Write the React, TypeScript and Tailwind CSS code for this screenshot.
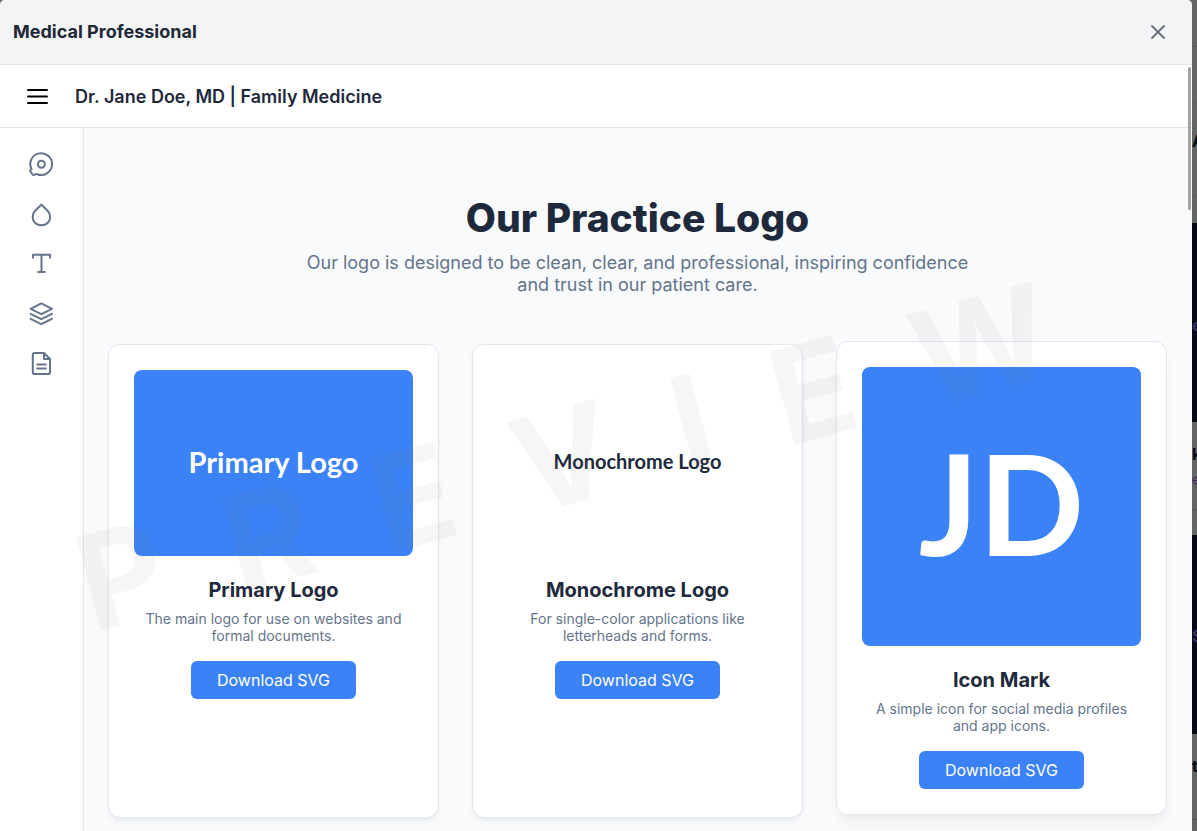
import type { ReactNode } from "react";
import { X } from "lucide-react";

function Icon({ children }: { children: ReactNode }) {
  return (
    <svg
      viewBox="0 0 26 26"
      className="size-[26px]"
      fill="none"
      stroke="currentColor"
      strokeWidth="2"
      strokeLinecap="round"
      strokeLinejoin="round"
    >
      {children}
    </svg>
  );
}

const nav = [
  {
    label: "Logo",
    icon: (
      <Icon>
        <path d="M9.2 23.2A10.9 10.9 0 1 0 3.6 18.2C3.2 18.6 2.2 18.9 2.1 19.9C2 20.9 3.2 21.2 3.5 21.8C3.8 22.6 4.2 24.1 5.6 23.9C6.8 23.7 7.6 22.7 9.2 23.2" />
        <circle cx="13.4" cy="13.3" r="3.5" />
      </Icon>
    ),
  },
  {
    label: "Colors",
    icon: (
      <Icon>
        <path d="M13.4 3.6L19.6 9.8C23 13.2 23 18.8 19.6 22C16.2 25.1 10.6 25.1 7.2 22C3.8 18.8 3.8 13.2 7.2 9.8Z" />
      </Icon>
    ),
  },
  {
    label: "Typography",
    icon: (
      <Icon>
        <path d="M5 6.8V3.8H22V6.8M13.5 3.8V21M10.2 21H16.8" />
      </Icon>
    ),
  },
  {
    label: "Layers",
    icon: (
      <Icon>
        <path d="M13.3 2.4L24 7.8L13.3 13.2L2.6 7.8ZM2.6 12.8L13.3 18.2L24 12.8M2.6 17.8L13.3 23.2L24 17.8" />
      </Icon>
    ),
  },
  {
    label: "Guidelines",
    icon: (
      <Icon>
        <path d="M16 2H6.6C5.6 2 4.8 2.8 4.8 3.8V21.2C4.8 22.2 5.6 23 6.6 23H20.2C21.2 23 22 22.2 22 21.2V8ZM16 2V8H22M9.2 13.6H17.8M9.2 17.6H17.8" />
      </Icon>
    ),
  },
];

type Logo = { title: string; text: string; art: "primary" | "mono" | "mark"; raised?: boolean };

const logos: Logo[] = [
  { title: "Primary Logo", text: "The main logo for use on websites and formal documents.", art: "primary" },
  { title: "Monochrome Logo", text: "For single-color applications like letterheads and forms.", art: "mono" },
  { title: "Icon Mark", text: "A simple icon for social media profiles and app icons.", art: "mark", raised: true },
];

const artStyles = {
  primary: "aspect-[3/2] bg-[#3b82f6] pb-1 text-white text-[29px]",
  mono: "aspect-[3/2] bg-white pb-1 text-[#1e293b] text-[20px]",
  mark: "aspect-square bg-[#3b82f6] pb-2 text-white text-[139px]",
};
const artText = { primary: "Primary Logo", mono: "Monochrome Logo", mark: "JD" };

function LogoCard({ title, text, art, raised }: Logo) {
  return (
    <article
      className={
        raised
          ? "-translate-y-[3px] rounded-xl border border-[#e2e8f0] bg-white p-[25px] text-center shadow-lg shadow-black/5"
          : "rounded-xl border border-[#e2e8f0] bg-white p-[25px] text-center shadow-md shadow-black/5"
      }
    >
      <div className={`flex items-center justify-center rounded-lg font-['Lato',sans-serif] font-bold leading-none ${artStyles[art]}`}>
        {artText[art]}
      </div>
      <h2 className="mt-[22px] text-xl leading-6 font-bold text-[#1e293b]">{title}</h2>
      <p className="mt-2 px-2 text-sm leading-[17px] text-[#64748b]">{text}</p>
      <button type="button" className="mt-[17px] rounded-md bg-[#3b82f6] px-[26px] py-[9px] text-base leading-5 text-white">
        Download SVG
      </button>
    </article>
  );
}

function PageBehind() {
  return (
    <div aria-hidden="true" className="flex w-[5px] shrink-0 flex-col overflow-hidden bg-[#646665] text-base leading-5 font-bold whitespace-nowrap text-[#050a12]">
      <div className="h-[47px] border-b border-[#565857]" />
      <div className="h-14 border-b border-[#5c5e5d]" />
      <div className="h-[94px] border-b border-[#5c5e5d] pt-7">A</div>
      <div className="h-[26px]" />
      <div className="h-[199px] bg-[#060a14] pt-[92px] text-[#3d3560]">e</div>
      <div className="h-[88px] border-b border-[#565857] pt-[22px]">
        <div>k</div>
        <div className="pt-2 text-xs font-normal text-[#3f2360]">er</div>
      </div>
      <div className="h-[25px]" />
      <div className="h-[199px] bg-[#060a14] pt-[91px] text-[#3d3560]">S</div>
      <div className="h-[86px] border-b border-[#565857] pt-[22px]">t</div>
    </div>
  );
}

export default function App() {
  return (
    <div className="flex h-screen overflow-hidden bg-[#646665] font-['Inter',sans-serif]">
      <div className="relative flex min-w-0 flex-1 flex-col overflow-hidden rounded-t-[5px] bg-[#f8fafc]">
        <header className="flex h-[65px] shrink-0 items-center justify-between border-b border-[#e5e7eb] bg-[#f3f4f6] pr-[22px] pl-[13px]">
          <h2 className="text-lg font-bold text-[#1f2937]">Medical Professional</h2>
          <button type="button" aria-label="Close" className="text-[#6b7280]">
            <X className="size-6" />
          </button>
        </header>
        <div className="relative flex min-h-0 flex-1 flex-col overflow-hidden">
          <div className="flex h-[63px] shrink-0 items-center border-b border-[#e2e8f0] bg-white pl-6">
            <button type="button" aria-label="Menu" className="text-black">
              <svg viewBox="0 0 26 26" className="size-[26px]" fill="none" stroke="currentColor" strokeWidth="2" strokeLinecap="round">
                <path d="M4 7H23M4 13.5H23M4 20H23" />
              </svg>
            </button>
            <p className="ml-[25px] pt-px text-lg font-semibold text-[#1e293b]">Dr. Jane Doe, MD | Family Medicine</p>
          </div>
          <div className="flex min-h-0 flex-1">
            <nav className="flex w-[84px] shrink-0 flex-col items-center gap-6 border-r border-[#e2e8f0] bg-white pt-[23px] pr-px text-[#64748b]">
              {nav.map((item) => (
                <a key={item.label} href="#" aria-label={item.label}>
                  {item.icon}
                </a>
              ))}
            </nav>
            <main className="min-w-0 flex-1 pt-[68px] pr-[25px] pl-6">
              <div className="mx-auto max-w-[690px] text-center">
                <h1 className="text-[39px] leading-[44px] font-extrabold text-[#1e293b]">Our Practice Logo</h1>
                <p className="mt-3 text-lg leading-[22px] text-[#64748b]">
                  Our logo is designed to be clean, clear, and professional, inspiring confidence and trust in our patient care.
                </p>
              </div>
              <div className="mt-12 grid grid-cols-3 gap-[33px]">
                {logos.map((logo) => (
                  <LogoCard key={logo.title} {...logo} />
                ))}
              </div>
            </main>
          </div>
          <div className="pointer-events-none absolute inset-0 flex items-center justify-center overflow-hidden">
            <span className="-rotate-15 text-[132px] leading-none font-bold tracking-[0.5em] text-[#808080]/7">PREVIEW</span>
          </div>
          <div className="absolute top-[2px] right-px h-[143px] w-[3px] rounded-full bg-[#a3a3a3]" />
        </div>
      </div>
      <PageBehind />
    </div>
  );
}
